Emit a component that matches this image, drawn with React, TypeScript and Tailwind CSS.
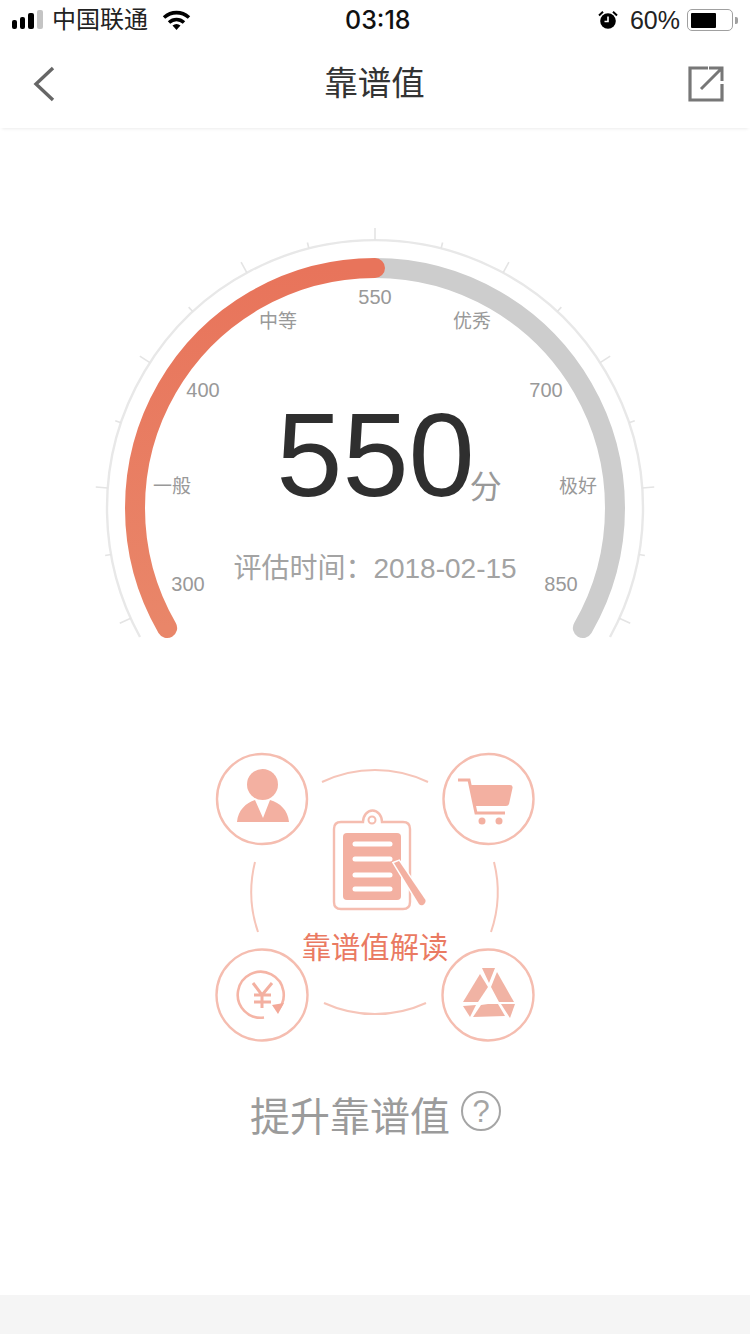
import React from "react";

const FONT = "font-['Liberation_Sans','Noto_Sans_CJK_SC',sans-serif]";
const ARC_CX = 375;
const ARC_CY = 508;

// ticks every 100/7 degrees, every other one is long
const ticks = Array.from({ length: 17 }, (_, i) => {
	const step = i - 8;
	const a = (step * 100) / 7 * (Math.PI / 180);
	const r2 = step % 2 === 0 ? 280 : 274;
	return {
		x1: ARC_CX + 268 * Math.sin(a),
		y1: ARC_CY - 268 * Math.cos(a),
		x2: ARC_CX + r2 * Math.sin(a),
		y2: ARC_CY - r2 * Math.cos(a),
	};
});

const StatusBar = () => (
	<div className="h-10 shrink-0 flex items-center justify-between pl-3 pr-3 text-black relative">
		<div className="flex items-center">
			<div className="flex items-end gap-[3px] h-[19px] mt-[-1px]">
				<div className="w-[5px] h-[9px] bg-black rounded-[2px]" />
				<div className="w-[5px] h-[12px] bg-black rounded-[2px]" />
				<div className="w-[6px] h-[16px] bg-black rounded-[2px]" />
				<div className="w-[6px] h-[19px] bg-[#c4c4c4] rounded-[2px]" />
			</div>
			<span className="ml-[9px] text-[24px] leading-10 text-[#222]">中国联通</span>
			<svg className="ml-[14px]" width="29" height="20" viewBox="0 0 29 20">
				<path d="M2 7.500C9.500 1 19.500 1 27 7.500" fill="none" stroke="#000" strokeWidth="3.600" />
				<path d="M7 12.500C11.500 8.500 17.500 8.500 22 12.500" fill="none" stroke="#000" strokeWidth="3.600" />
				<path d="M10.500 15.500C13 13.500 16 13.500 18.500 15.500L14.500 20Z" fill="#000" />
			</svg>
		</div>
		<span className="absolute left-[345px] top-0 font-['Inter',sans-serif] text-[25px] leading-10 font-medium text-[#111]">03:18</span>
		<div className="flex items-center">
			<svg className="ml-px" width="20" height="20" viewBox="0 0 20 20">
				<circle cx="10" cy="11" r="7.800" fill="#000" />
				<path d="M10 6.500V11.500H6.500" fill="none" stroke="#fff" strokeWidth="1.600" />
				<path d="M1 5.500L5 1.800M19 5.500L15 1.800" stroke="#000" strokeWidth="2" />
			</svg>
			<span className="ml-[12px] text-[25px] leading-10 text-[#222]">60%</span>
			<div className="ml-[7px] w-[46px] h-[22px] rounded-[5px] border-[1.5px] border-[#a0a0a0] p-[2.5px]">
				<div className="w-[25px] h-full bg-black rounded-[1px]" />
			</div>
			<div className="ml-[2px] w-[3px] h-[7px] bg-[#a0a0a0] rounded-r-[2px]" />
		</div>
	</div>
);

const NavBar = () => (
	<div className="h-[88px] shrink-0 flex items-center justify-between pl-[32px] pr-[26px] bg-white shadow-[0_3px_3px_-2px_rgba(0,0,0,0.08)]">
		<svg width="24" height="36" viewBox="0 0 24 36">
			<path d="M21 2L4 18L21 34" fill="none" stroke="#666" strokeWidth="3.400" />
		</svg>
		<span className="ml-[5px] text-[33.5px] leading-[44px] text-[#333]">靠谱值</span>
		<svg width="36" height="36" viewBox="0 0 36 36">
			<path d="M20 2H2V34H34V18" fill="none" stroke="#777" strokeWidth="3.200" />
			<path d="M13 23L33 3M21 2H34V15" fill="none" stroke="#777" strokeWidth="3" />
		</svg>
	</div>
);

const Gauge = () => (
	<div className="relative w-[570px] h-[430px] mt-[92px] mx-auto shrink-0 text-[#999]">
		<svg className="absolute inset-0" width="570" height="430" viewBox="90 220 570 430">
			<defs>
				<linearGradient id="prog" x1="0" y1="1" x2="0" y2="0">
					<stop offset="0" stopColor="#e98669" />
					<stop offset="1" stopColor="#e8745b" />
				</linearGradient>
			</defs>
			<path d="M140 637A268 268 0 1 1 610 637" fill="none" stroke="#e8e8e8" strokeWidth="2.400" />
			{ticks.map((t, i) => (
				<line key={i} x1={t.x1} y1={t.y1} x2={t.x2} y2={t.y2} stroke="#e4e4e4" strokeWidth="1.600" />
			))}
			<path d="M375 268A240 240 0 0 1 582.850 628" fill="none" stroke="#cdcdcd" strokeWidth="20" strokeLinecap="round" />
			<path d="M167.150 628A240 240 0 0 1 375 268" fill="none" stroke="url(#prog)" strokeWidth="20" strokeLinecap="round" />
		</svg>
		<span className="absolute left-[285px] top-[77px] -translate-x-1/2 -translate-y-1/2 text-[20px] leading-6">550</span>
		<span className="absolute left-[188px] top-[102px] -translate-x-1/2 -translate-y-1/2 text-[19px] leading-6">中等</span>
		<span className="absolute left-[382px] top-[102px] -translate-x-1/2 -translate-y-1/2 text-[19px] leading-6">优秀</span>
		<span className="absolute left-[113px] top-[170px] -translate-x-1/2 -translate-y-1/2 text-[20px] leading-6">400</span>
		<span className="absolute left-[456px] top-[170px] -translate-x-1/2 -translate-y-1/2 text-[20px] leading-6">700</span>
		<span className="absolute left-[82px] top-[267px] -translate-x-1/2 -translate-y-1/2 text-[19px] leading-6">一般</span>
		<span className="absolute left-[488px] top-[267px] -translate-x-1/2 -translate-y-1/2 text-[19px] leading-6">极好</span>
		<span className="absolute left-[98px] top-[364px] -translate-x-1/2 -translate-y-1/2 text-[20px] leading-6">300</span>
		<span className="absolute left-[471px] top-[364px] -translate-x-1/2 -translate-y-1/2 text-[20px] leading-6">850</span>
		<div className="absolute left-0 right-0 top-[170px] flex flex-col items-center">
			<div className="flex items-end pl-[28px]">
				<span className="text-[119px] leading-[130px] text-[#2f2f2f]">550</span>
				<span className="ml-[-5px] text-[32px] leading-[40px] mb-[13px] text-[#999]">分</span>
			</div>
			<span className="mt-[31px] text-[28px] leading-9 text-[#a3a3a3]">评估时间：2018-02-15</span>
		</div>
	</div>
);

const Diagram = () => (
	<div className="relative w-[340px] h-[310px] mt-[95px] mx-auto shrink-0">
		<svg className="absolute inset-0" width="340" height="310" viewBox="205 745 340 310">
			{/* linking arcs */}
			<g fill="none" stroke="#f6c5b9" strokeWidth="2">
				<path d="M322 782A122.500 122.500 0 0 1 428 782" />
				<path d="M255 862A123 123 0 0 0 258 932" />
				<path d="M494 862A123 123 0 0 1 491 932" />
				<path d="M324 1003A122.500 122.500 0 0 0 426 1003" />
			</g>
			<g fill="none" stroke="#f5bdb0" strokeWidth="2.400">
				<circle cx="262" cy="799" r="45" />
				<circle cx="488.500" cy="799" r="45" />
				<circle cx="262" cy="995" r="45.500" />
				<circle cx="488" cy="995" r="45.500" />
			</g>
			{/* person */}
			<g fill="#f3b0a1">
				<circle cx="262.500" cy="784.500" r="15.500" />
				<path d="M237 822C238 810 246 803 255 800L263 818L270 800C280 803 288 810 289 822Z" />
			</g>
			{/* cart */}
			<g fill="#f3b0a1">
				<path d="M458 780H469L476 813H505" fill="none" stroke="#f3b0a1" strokeWidth="3" />
				<path d="M471 785H510Q513 785 512.500 788L509 804Q508.500 806 506 806H475Z" />
				<circle cx="482" cy="821" r="3.500" />
				<circle cx="499" cy="821" r="3.500" />
			</g>
			{/* clipboard */}
			<path d="M341 822H363A9.500 11.500 0 0 1 382 822H403Q410 822 410 829V902Q410 909 403 909H341Q334 909 334 902V829Q334 822 341 822Z" fill="none" stroke="#f5bdb0" strokeWidth="2.400" />
			<circle cx="372" cy="820" r="3.500" fill="none" stroke="#f5bdb0" strokeWidth="2" />
			<rect x="343" y="833" width="58" height="67" rx="4" fill="#f3b0a1" />
			<g stroke="#fff" strokeWidth="5" strokeLinecap="round">
				<line x1="355" y1="844" x2="390" y2="844" />
				<line x1="355" y1="859" x2="390" y2="859" />
				<line x1="355" y1="875" x2="390" y2="875" />
				<line x1="355" y1="889" x2="390" y2="889" />
			</g>
			<path d="M394 863L399 861L425.500 900Q426 903 423 905Q420.500 906 419 904Z" fill="#f3b0a1" stroke="#fff" strokeWidth="3" paintOrder="stroke" />
			{/* yen */}
			<path d="M277 1011A23 23 0 1 0 264 1017.500" fill="none" stroke="#f5b5a6" strokeWidth="2.600" />
			<path d="M272 1005L284 1003L278 1014Z" fill="#f3a898" />
			<path d="M253 983L262 995L272 983M262 995V1008M254 995H271M254 1002H271" fill="none" stroke="#f3b0a1" strokeWidth="3" />
			{/* triangle mark */}
			<g fill="#f1b3a4">
				<path d="M482 968H495L489 983Z" />
				<path d="M480 974L488 987L478 1002H463Z" />
				<path d="M497 972L514 1002H499L491 987Z" />
				<path d="M463 1006L476 1005L470 1017Z" />
				<path d="M488 1004H498L505 1016L473 1017L481 1005Z" />
				<path d="M501 1004H515L510 1018Z" />
			</g>
		</svg>
		<div className="absolute left-0 right-0 top-[185px] text-center text-[29.3px] leading-9 text-[#ea7a62]">靠谱值解读</div>
	</div>
);

const App = () => {
	return (
		<div className={`w-[750px] h-[1334px] flex flex-col bg-white overflow-hidden ${FONT}`}>
			<StatusBar />
			<NavBar />
			<Gauge />
			<Diagram />
			<div className="mt-[31px] h-[60px] flex items-center pl-[250px] shrink-0">
				<span className="mt-[2px] text-[40px] leading-[60px] text-[#9b9b9b]">提升靠谱值</span>
				<div className="ml-[11px] mt-[-10px] w-[40px] h-[40px] rounded-full border-2 border-[#a5a5a5] flex items-center justify-center text-[31px] leading-none text-[#a5a5a5]">?</div>
			</div>
			<div className="mt-auto h-[39px] shrink-0 bg-[#f5f5f5]" />
		</div>
	);
};

export default App;
